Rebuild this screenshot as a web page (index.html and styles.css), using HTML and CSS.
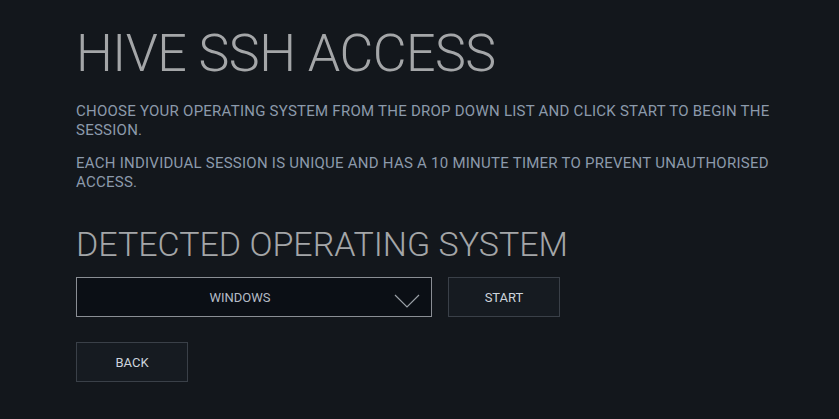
FILE: index.html
```html
<!DOCTYPE html>
<html lang="en">
<head>
<meta charset="utf-8">
<title>Hive SSH Access</title>
<link rel="stylesheet" href="styles.css">
</head>
<body>
<main class="page">
  <h1 class="title">HIVE SSH ACCESS</h1>
  <p class="info">CHOOSE YOUR OPERATING SYSTEM FROM THE DROP DOWN LIST AND CLICK START TO BEGIN THE SESSION.</p>
  <p class="info">EACH INDIVIDUAL SESSION IS UNIQUE AND HAS A 10 MINUTE TIMER TO PREVENT UNAUTHORISED ACCESS.</p>
  <h2 class="subtitle">DETECTED OPERATING SYSTEM</h2>
  <div class="controls">
    <div class="select">
      <span class="select-value">WINDOWS</span>
      <svg class="chevron" width="26" height="14" viewBox="0 0 26 14"><polyline points="1,1 13,13 25,1" fill="none" stroke="#9aa0a6" stroke-width="1.2"/></svg>
    </div>
    <button class="btn">START</button>
  </div>
  <button class="btn back">BACK</button>
</main>
</body>
</html>
```

FILE: styles.css
```css
html, body {
  margin: 0;
  padding: 0;
  background: #13171c;
  height: 100%;
}
body {
  font-family: Roboto, "Liberation Sans", sans-serif;
}
.page {
  padding: 24px 0 0 76px;
  width: 720px;
}
.title {
  margin: 0;
  font-weight: 300;
  font-size: 52px;
  line-height: 60px;
  color: #a4a6a8;
  letter-spacing: -0.5px;
}
.info {
  margin: 18px 0 0;
  font-size: 15px;
  line-height: 19px;
  color: #8c9aab;
  font-weight: 400;
  letter-spacing: 0.25px;
}
.info + .info {
  margin-top: 14px;
}
.subtitle {
  margin: 32px 0 0;
  font-weight: 300;
  font-size: 34px;
  line-height: 40px;
  color: #a4a6a8;
}
.controls {
  display: flex;
  gap: 16px;
  margin-top: 13px;
}
.select {
  box-sizing: border-box;
  width: 356px;
  height: 40px;
  border: 1px solid #8a8e94;
  background: #0b0f15;
  display: flex;
  align-items: center;
  position: relative;
  padding-right: 28px;
}
.select-value {
  flex: 1;
  text-align: center;
  color: #b4bcc6;
  font-size: 13px;
}
.chevron {
  position: absolute;
  right: 11px;
  top: 16px;
}
.btn {
  box-sizing: border-box;
  width: 112px;
  height: 40px;
  border: 1px solid #3a4048;
  background: #161b21;
  color: #cdd4dc;
  font-family: Roboto, "Liberation Sans", sans-serif;
  font-size: 13px;
  padding: 0;
}
.back {
  display: block;
  margin-top: 25px;
}
```
